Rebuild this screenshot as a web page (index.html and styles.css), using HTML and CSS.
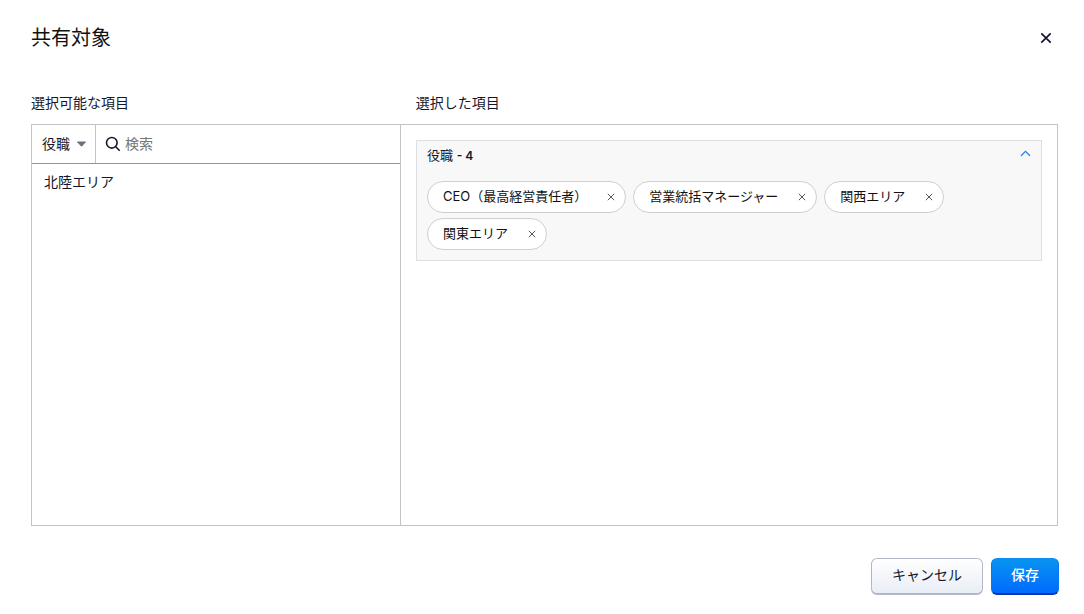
FILE: index.html
```html
<!DOCTYPE html>
<html lang="ja">
<head>
<meta charset="utf-8">
<meta name="viewport" content="width=device-width, initial-scale=1">
<title>共有対象</title>
<link rel="stylesheet" href="styles.css">
</head>
<body>
<main class="dialog">
  <header class="dialog-header">
    <h1 class="title">共有対象</h1>
    <button class="close" type="button" aria-label="閉じる">
      <svg width="12" height="12" viewBox="0 0 12 12"><path d="M1.3 1.3l9.4 9.4M10.7 1.3l-9.4 9.4"/></svg>
    </button>
  </header>

  <div class="labels">
    <h2 class="label">選択可能な項目</h2>
    <h2 class="label label-selected">選択した項目</h2>
  </div>

  <div class="picker">
    <section class="available">
      <div class="filter">
        <div class="type">
          <select class="type-select" aria-label="種類"><option>役職</option></select>
          <svg class="caret" width="9" height="6" viewBox="0 0 9 6"><path d="M0.8 0.5h7.4q0.8 0 0.5 0.8L5.3 5q-0.8 0.8-1.6 0L0.3 1.3Q0 0.5 0.8 0.5z"/></svg>
        </div>
        <label class="search">
          <svg class="search-icon" width="16" height="16" viewBox="0 0 16 16"><circle cx="6.8" cy="6.8" r="5.3"/><path d="M10.7 10.7l4 4"/></svg>
          <input class="search-input" type="text" placeholder="検索" aria-label="検索">
        </label>
      </div>
      <ul class="options">
        <li><button class="option" type="button">北陸エリア</button></li>
      </ul>
    </section>

    <section class="selected">
      <div class="group">
        <div class="group-header">
          <h3 class="group-title">役職 <b>- 4</b></h3>
          <button class="collapse" type="button" aria-label="折りたたむ">
            <svg width="11" height="7" viewBox="0 0 11 7"><path d="M1 5.7l4.5-4.4L10 5.7"/></svg>
          </button>
        </div>
        <ul class="chips">
          <li class="chip">CEO（最高経営責任者）<button class="remove" type="button" aria-label="CEO（最高経営責任者）を削除"><svg width="8" height="8" viewBox="0 0 8 8"><path d="M0.8 0.8l6.4 6.4M7.2 0.8L0.8 7.2"/></svg></button></li>
          <li class="chip">営業統括マネージャー<button class="remove" type="button" aria-label="営業統括マネージャーを削除"><svg width="8" height="8" viewBox="0 0 8 8"><path d="M0.8 0.8l6.4 6.4M7.2 0.8L0.8 7.2"/></svg></button></li>
          <li class="chip">関西エリア<button class="remove" type="button" aria-label="関西エリアを削除"><svg width="8" height="8" viewBox="0 0 8 8"><path d="M0.8 0.8l6.4 6.4M7.2 0.8L0.8 7.2"/></svg></button></li>
          <li class="chip">関東エリア<button class="remove" type="button" aria-label="関東エリアを削除"><svg width="8" height="8" viewBox="0 0 8 8"><path d="M0.8 0.8l6.4 6.4M7.2 0.8L0.8 7.2"/></svg></button></li>
        </ul>
      </div>
    </section>
  </div>

  <footer class="actions">
    <button class="btn btn-secondary" type="button">キャンセル</button>
    <button class="btn btn-primary" type="button">保存</button>
  </footer>
</main>
</body>
</html>
```
FILE: styles.css
```css
*, *::before, *::after { box-sizing: border-box; }

body {
  margin: 0;
  background: #fff;
  color: #14172b;
  font: 14px/20px Inter, "Noto Sans CJK JP", sans-serif;
}

button, input, select { font: inherit; color: inherit; }

button {
  padding: 0;
  border: 0;
  background: none;
  cursor: pointer;
}

svg { display: block; fill: none; stroke: currentColor; }

h1, h2, h3, ul { margin: 0; padding: 0; font-weight: 400; list-style: none; }

.dialog {
  display: flex;
  flex-direction: column;
  min-height: 100vh;
  padding: 24px 26px 19px 31px;
}

.dialog-header {
  display: flex;
  align-items: center;
  justify-content: space-between;
  padding-right: 6px;
}

.title { color: #111; font-size: 20px; line-height: 28px; }

.close { stroke-width: 1.7; }

.labels, .picker {
  display: grid;
  grid-template-columns: 9fr 16fr;
}

.labels { margin: 41px 0 11px; }

.label { font-size: 14px; }

.label-selected { padding-left: 15px; }

.picker {
  flex: 1;
  border: 1px solid #c4c4c4;
}

.available { border-right: 1px solid #c4c4c4; }

.filter {
  display: flex;
  height: 39px;
  border-bottom: 1px solid #8f959f;
}

.type {
  display: flex;
  align-items: center;
  gap: 7px;
  padding: 0 9px 0 10px;
  border-right: 1px solid #c4c4c4;
}

.type-select {
  padding: 0;
  border: 0;
  background: none;
  appearance: none;
}

.caret { fill: #6b7080; stroke: none; }

.search {
  display: flex;
  flex: 1;
  align-items: center;
  gap: 4px;
  padding: 0 9px;
}

.search-icon { stroke-width: 1.6; }

.search-input {
  flex: 1;
  min-width: 0;
  padding: 0;
  border: 0;
  outline: 0;
  background: none;
}

.search-input::placeholder { color: #757575; opacity: 1; }

.options { padding: 8px 0; }

.option {
  width: 100%;
  padding: 0 12px;
  text-align: left;
}

.selected { padding: 15px; }

.group {
  padding: 4px 10px 10px;
  border: 1px solid #dddfe2;
  background: #f8f8f8;
}

.group-header {
  display: flex;
  align-items: flex-start;
  justify-content: space-between;
  height: 36px;
}

.group-title { font-size: 13px; }

.group-title b { font-size: 12px; font-weight: 600; }

.collapse { padding: 5px 0; color: #1a80ee; stroke-width: 1.2; }

.chips {
  display: flex;
  flex-wrap: wrap;
  gap: 5px 7px;
}

.chip {
  display: flex;
  align-items: center;
  height: 32px;
  padding: 0 9px 2px 15px;
  border: 1px solid #cfcfcf;
  border-radius: 16px;
  background: #fff;
  color: #111;
  font-size: 13px;
}

.remove {
  margin-left: 18px;
  padding: 2px 1px 0 2px;
  color: #555;
}

.actions {
  display: flex;
  justify-content: flex-end;
  gap: 8px;
  margin: 32px -1px 0 0;
}

.btn {
  height: 37px;
  padding: 0 20px 2px;
  border: 1px solid #b1b7c8;
  border-bottom-width: 2px;
  border-radius: 6px;
}

.btn-secondary { background: linear-gradient(#fff, #e9edf5); }

.btn-primary {
  padding: 0 19px 2px;
  border-color: #0c8cf0 #0875f2 #0338b0;
  background: linear-gradient(#0794f0, #006aff);
  color: #fff;
  font-weight: 500;
}
```
